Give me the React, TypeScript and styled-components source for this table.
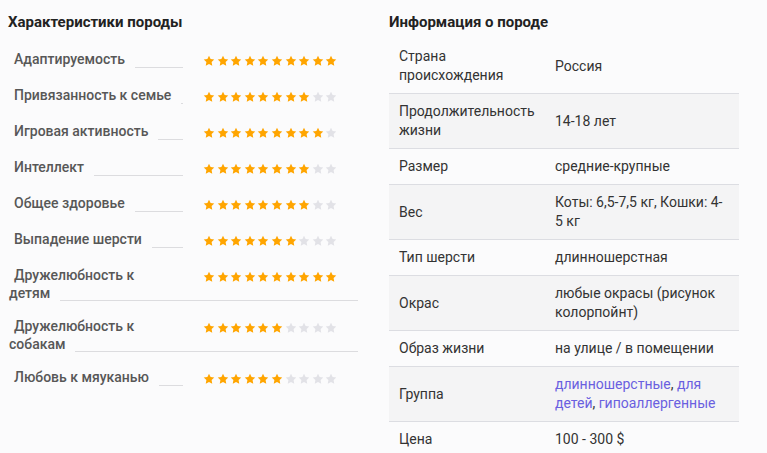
import React from 'react';
import styled, { createGlobalStyle } from 'styled-components';

interface Trait {
  label: string;
  tail?: string;
  value: number;
}

interface InfoItem {
  name: string;
  value: string;
  links?: string[];
}

const traits: Trait[] = [
  { label: 'Адаптируемость', value: 10 },
  { label: 'Привязанность к семье', value: 8 },
  { label: 'Игровая активность', value: 9 },
  { label: 'Интеллект', value: 8 },
  { label: 'Общее здоровье', value: 8 },
  { label: 'Выпадение шерсти', value: 7 },
  { label: 'Дружелюбность к', tail: 'детям', value: 10 },
  { label: 'Дружелюбность к', tail: 'собакам', value: 6 },
  { label: 'Любовь к мяуканью', value: 6 },
];

const info: InfoItem[] = [
  { name: 'Страна происхождения', value: 'Россия' },
  { name: 'Продолжительность жизни', value: '14-18 лет' },
  { name: 'Размер', value: 'средние-крупные' },
  { name: 'Вес', value: 'Коты: 6,5-7,5 кг, Кошки: 4-5 кг' },
  { name: 'Тип шерсти', value: 'длинношерстная' },
  { name: 'Окрас', value: 'любые окрасы (рисунок колорпойнт)' },
  { name: 'Образ жизни', value: 'на улице / в помещении' },
  { name: 'Группа', value: '', links: ['длинношерстные', 'для детей', 'гипоаллергенные'] },
  { name: 'Цена', value: '100 - 300 $' },
];

const StarRating: React.FC<{ value: number }> = ({ value }) => (
  <Stars>
    {Array.from({ length: 10 }).map((_, i) => (
      <Star key={i} viewBox="0 0 24 24" $on={i < value}>
        <polygon points="12,1.5 15.2,8.1 22.5,9.1 17.2,14.2 18.5,21.5 12,18 5.5,21.5 6.8,14.2 1.5,9.1 8.8,8.1" />
      </Star>
    ))}
  </Stars>
);

const App: React.FC = () => {
  return (
    <>
      <GlobalStyle />
      <Page>
        <Column>
          <Title>Характеристики породы</Title>
          <TraitList>
            {traits.map((t, i) => (
              <TraitRow key={i} $double={!!t.tail}>
                <TraitHead>
                  <LabelCell>
                    <Label>{t.label}</Label>
                    {!t.tail && <Filler />}
                  </LabelCell>
                  <StarRating value={t.value} />
                </TraitHead>
                {t.tail && (
                  <TailLine>
                    <Tail>{t.tail}</Tail>
                    <Filler />
                  </TailLine>
                )}
              </TraitRow>
            ))}
          </TraitList>
        </Column>
        <Column>
          <Title>Информация о породе</Title>
          <InfoTable>
            <tbody>
              {info.map((row, i) => (
                <InfoRow key={i} $shaded={i % 2 === 1}>
                  <KeyCell>{row.name}</KeyCell>
                  <ValueCell>
                    {row.links
                      ? row.links.map((l, j) => (
                          <React.Fragment key={l}>
                            <GroupLink href="#">{l}</GroupLink>
                            {j < row.links!.length - 1 && ', '}
                          </React.Fragment>
                        ))
                      : row.value}
                  </ValueCell>
                </InfoRow>
              ))}
            </tbody>
          </InfoTable>
        </Column>
      </Page>
    </>
  );
};

const GlobalStyle = createGlobalStyle`
  body {
    margin: 0;
    background: #fbfbfc;
    font-family: Roboto, 'Liberation Sans', sans-serif;
  }
`;

const Page = styled.div`
  display: grid;
  grid-template-columns: 350px 350px;
  column-gap: 31px;
  padding: 13px 8px 0;
`;

const Column = styled.section`
  display: flex;
  flex-direction: column;
`;

const Title = styled.h2`
  margin: 0;
  font-size: 15px;
  line-height: 18px;
  font-weight: 700;
  color: #222;
`;

const TraitList = styled.div`
  display: flex;
  flex-direction: column;
  margin-top: 19px;
`;

const TraitRow = styled.div<{ $double: boolean }>`
  display: flex;
  flex-direction: column;
  margin-bottom: ${(p) => (p.$double ? '16px' : '18px')};
`;

const TraitHead = styled.div`
  display: flex;
  align-items: flex-start;
`;

const LabelCell = styled.div`
  display: flex;
  width: 175px;
  flex-shrink: 0;
`;

const Label = styled.span`
  padding-left: 6px;
  font-size: 14px;
  line-height: 18px;
  font-weight: 500;
  color: #575757;
  white-space: nowrap;
`;

const Filler = styled.span`
  flex: 1;
  margin-left: 10px;
  border-bottom: 1px solid #dcdcdf;
`;

const TailLine = styled.div`
  display: flex;
  height: 15px;
  margin-top: 2px;
`;

const Tail = styled.span`
  padding-left: 1px;
  font-size: 14px;
  line-height: 15px;
  font-weight: 500;
  color: #575757;
`;

const Stars = styled.div`
  display: flex;
  gap: 1.6px;
  margin: 5px 0 0 20px;
`;

const Star = styled.svg<{ $on: boolean }>`
  width: 12px;
  height: 12px;
  fill: ${(p) => (p.$on ? '#ffa500' : '#e2e2e7')};
`;

const InfoTable = styled.table`
  margin-top: 8px;
  width: 350px;
  border-collapse: collapse;
  font-size: 14px;
  line-height: 19px;
  color: #333;
`;

const InfoRow = styled.tr<{ $shaded: boolean }>`
  background: ${(p) => (p.$shaded ? '#f4f4f5' : 'transparent')};
  border-bottom: 1px solid #dcdde2;
`;

const KeyCell = styled.td`
  width: 136px;
  padding: 8px 10px;
  vertical-align: middle;
`;

const ValueCell = styled.td`
  padding: 8px 10px;
  vertical-align: middle;
`;

const GroupLink = styled.a`
  color: #6a5fe0;
  text-decoration: none;
`;

export default App;
